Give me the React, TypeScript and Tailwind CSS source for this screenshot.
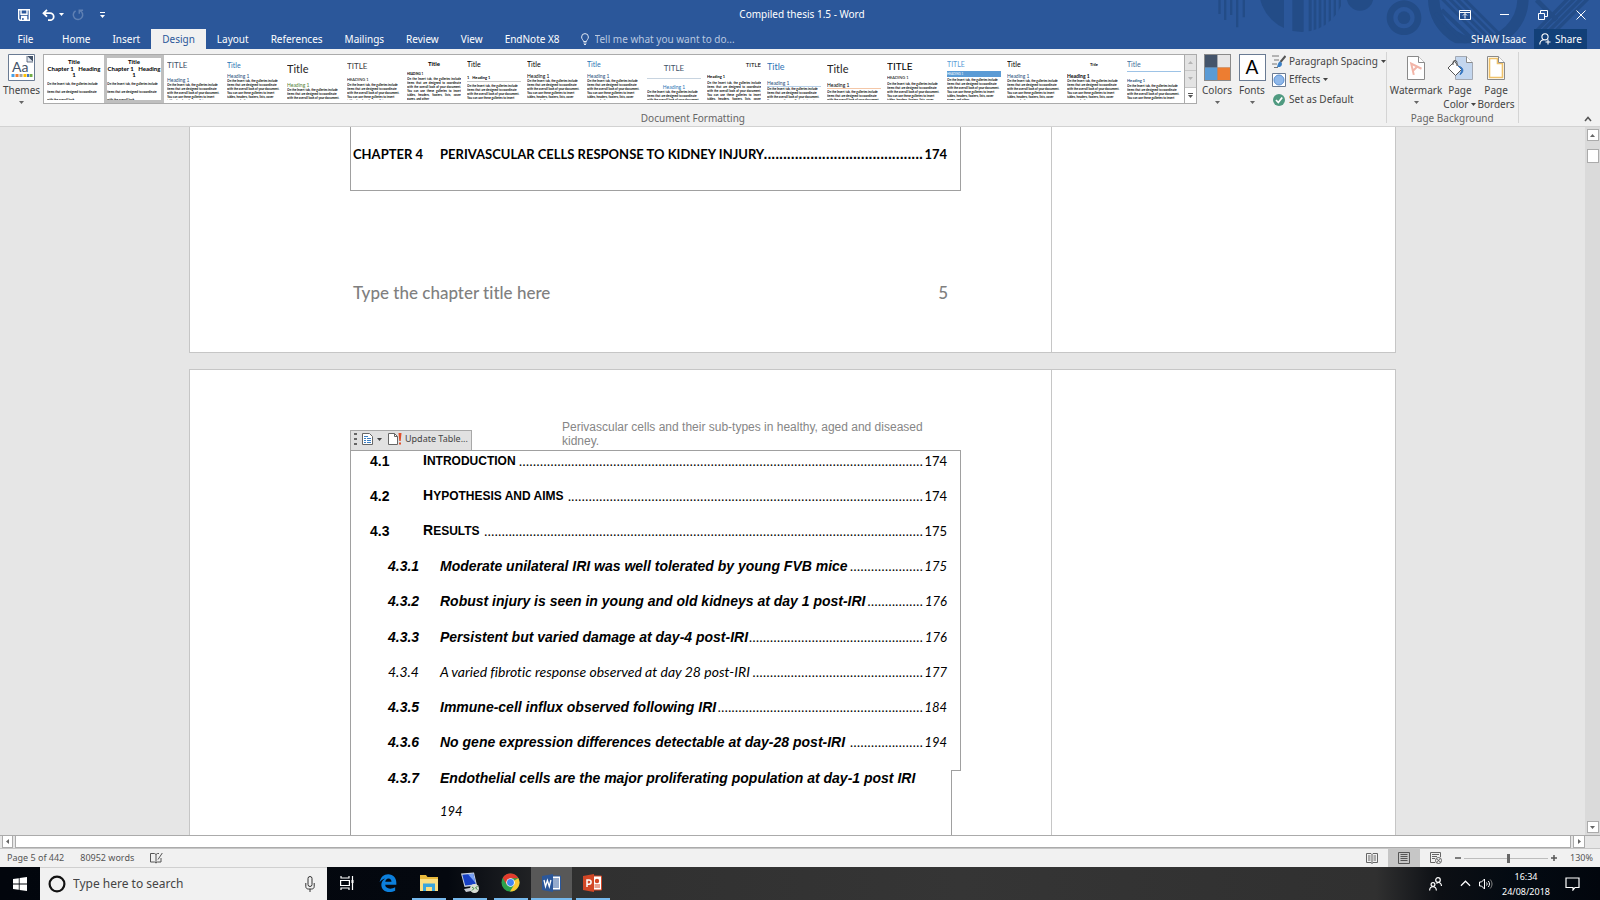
import type { ReactNode } from "react";

const BODY =
  "On the Insert tab, the galleries include items that are designed to coordinate with the overall look of your document. You can use these galleries to insert tables, headers, footers, lists, cover pages, and other";

type Style = { title: string; titleCls: string; head: string; headCls: string; body?: string; bodyCls?: string; selected?: boolean };

const STYLES: Style[] = [
  { title: "Title", titleCls: "text-[6px] leading-[8px] font-bold text-center", head: "Chapter 1   Heading\n1", headCls: "text-[6px] leading-[6px] font-bold text-center whitespace-pre mb-[2px]", body: "On the Insert tab, the galleries include items that are designed to coordinate with the overall look", bodyCls: "leading-[8px]" },
  { title: "Title", titleCls: "text-[6px] leading-[8px] font-bold text-center", head: "Chapter 1   Heading\n1", headCls: "text-[6px] leading-[6px] font-bold text-center whitespace-pre mb-[2px]", body: "On the Insert tab, the galleries include items that are designed to coordinate with the overall look", bodyCls: "leading-[8px]", selected: true },
  { title: "TITLE", titleCls: "text-[8px] leading-[14px] text-[#44546a]", head: "Heading 1", headCls: "text-[5px] leading-[6px] mt-[5px] text-[#1f4e79]" },
  { title: "Title", titleCls: "text-[7px] leading-[14px] text-[#2e74b5]", head: "Heading 1", headCls: "text-[5px] leading-[5px] mt-[2px] text-[#1f4e79]" },
  { title: "Title", titleCls: "text-[11px] leading-[22px] text-[#262626]", head: "Heading 1", headCls: "text-[5px] leading-[6px] mt-[2px] text-[#538135]" },
  { title: "TITLE", titleCls: "text-[8px] leading-[16px] text-[#404040]", head: "HEADING 1", headCls: "text-[4px] leading-[6px] mt-[3px]" },
  { title: "Title", titleCls: "text-[6px] leading-[12px] font-bold text-center", head: "HEADING 1", headCls: "text-[3px] leading-[5px] mt-[2px] font-bold", bodyCls: "leading-[4px] text-justify" },
  { title: "Title", titleCls: "text-[7px] leading-[13px]", head: "1   Heading 1", headCls: "text-[4px] leading-[6px] mt-[4px] mb-[2px] border-b border-[#c8c8c8] whitespace-pre font-bold" },
  { title: "Title", titleCls: "text-[7px] leading-[13px]", head: "Heading 1", headCls: "text-[5px] leading-[6px] mt-[2px]" },
  { title: "Title", titleCls: "text-[7px] leading-[13px] text-[#2e74b5]", head: "Heading 1", headCls: "text-[5px] leading-[6px] mt-[2px] text-[#1f4e79]" },
  { title: "TITLE", titleCls: "text-[8px] leading-[20px] text-[#44546a] text-center border-b border-[#c8d4e0]", head: "Heading 1", headCls: "text-[5px] leading-[6px] mt-[5px] text-center text-[#2e74b5]" },
  { title: "TITLE", titleCls: "text-[6px] leading-[14px] text-right", head: "Heading 1", headCls: "text-[4px] leading-[6px] mt-[2px] mb-[1px] font-bold", bodyCls: "leading-[4px] text-justify" },
  { title: "Title", titleCls: "text-[9px] leading-[18px] text-[#2e74b5]", head: "Heading 1", headCls: "text-[5px] leading-[6px] mt-[4px] text-[#1f4e79] border-b border-[#b8d0e8]" },
  { title: "Title", titleCls: "text-[11px] leading-[22px] text-[#262626]", head: "Heading 1", headCls: "text-[5px] leading-[6px] mt-[2px] mb-[1px] border-b border-[#f4c7a8]" },
  { title: "TITLE", titleCls: "text-[10px] leading-[17px]", head: "HEADING 1", headCls: "text-[4px] leading-[6px] mb-[1px]" },
  { title: "TITLE", titleCls: "text-[7px] leading-[13px] text-[#5b9bd5]", head: "HEADING 1", headCls: "text-[3px] leading-[6px] bg-[#5b9bd5] text-white mb-[1px]" },
  { title: "Title", titleCls: "text-[7px] leading-[13px]", head: "Heading 1", headCls: "text-[5px] leading-[6px] mt-[2px] text-[#1f4e79]" },
  { title: "Title", titleCls: "text-[4px] leading-[14px] font-bold text-center", head: "Heading 1", headCls: "text-[5px] leading-[6px] mt-[1px] font-bold", bodyCls: "leading-[4px] font-bold" },
  { title: "Title", titleCls: "text-[7px] leading-[13px] text-[#44709d] border-b border-[#9dc3e6]", head: "Heading 1", headCls: "text-[4px] leading-[6px] mt-[6px] text-[#1f4e79] font-bold" },
];

const TABS = ["Home", "Insert", "Design", "Layout", "References", "Mailings", "Review", "View", "EndNote X8"];

type Entry = { no: string; title: string; dots: number; page: string; plain?: boolean };

const SECTIONS: Entry[] = [
  { no: "4.1", title: "Introduction", dots: 116, page: "174" },
  { no: "4.2", title: "Hypothesis and aims", dots: 102, page: "174" },
  { no: "4.3", title: "Results", dots: 126, page: "175" },
];

const SUBSECTIONS: Entry[] = [
  { no: "4.3.1", title: "Moderate unilateral IRI was well tolerated by young FVB mice", dots: 21, page: "175" },
  { no: "4.3.2", title: "Robust injury is seen in young and old kidneys at day 1 post-IRI", dots: 16, page: "176" },
  { no: "4.3.3", title: "Persistent but varied damage at day-4 post-IRI", dots: 50, page: "176" },
  { no: "4.3.4", title: "A varied fibrotic response observed at day 28 post-IRI", dots: 49, page: "177", plain: true },
  { no: "4.3.5", title: "Immune-cell influx observed following IRI", dots: 59, page: "184" },
  { no: "4.3.6", title: "No gene expression differences detectable at day-28 post-IRI", dots: 21, page: "194" },
];

function Caret({ className = "" }: { className?: string }) {
  return (
    <svg viewBox="0 0 5 3" className={`h-[3px] w-[5px] shrink-0 ${className}`} aria-hidden="true">
      <path d="M0 0h5L2.5 3z" fill="currentColor" />
    </svg>
  );
}

function Leader({ count, className = "font-['Noto_Sans',sans-serif] text-[13px]" }: { count: number; className?: string }) {
  return (
    <span className={`flex min-w-0 flex-1 justify-end overflow-hidden pr-px not-italic ${className}`}>
      {".".repeat(count)}
    </span>
  );
}

function HeaderArt() {
  return (
    <svg viewBox="0 0 1200 147" className="pointer-events-none absolute top-0 right-0 h-[49px] w-[400px]" aria-hidden="true">
      <defs>
        <clipPath id="disc"><circle cx="305" cy="-32" r="128" /></clipPath>
        <clipPath id="wheel"><path d="M680 0h310v130H680z" /></clipPath>
        <clipPath id="inner"><circle cx="835" cy="-5" r="125" /></clipPath>
      </defs>
      <g fill="#234c87">
        <path d="M55 0h7v42h-7zM72 0h7v60h-7zM90 0h7v45h-7zM108 0h7v82h-7zM128 0h7v52h-7z" />
        <g clipPath="url(#disc)">
          <path d="M160 0h92v110h-92zM277 0h34v110h-34zM326 0h9v110h-9zM341 0h8v110h-8zM356 0h8v110h-8zM371 0h7v110h-7zM386 0h7v110h-7zM401 0h7v110h-7zM416 0h7v110h-7z" />
        </g>
        <circle cx="480" cy="-8" r="40" />
        <path fillRule="evenodd" d="M612 1a52 52 0 1 0 .1 0zM612 21a32 32 0 1 1-.1 0z" />
        <circle cx="612" cy="53" r="19" />
      </g>
      <g clipPath="url(#wheel)" fill="none" stroke="#234c87">
        <circle cx="835" cy="-5" r="134" strokeWidth="34" />
        <g clipPath="url(#inner)" strokeWidth="9">
          <path d="M700 -30L880 150M722 -30L902 150M744 -30L924 150M766 -30L946 150" />
        </g>
        <path d="M705 40L800 130M725 30L830 130" strokeWidth="12" />
      </g>
      <g stroke="#234c87" strokeWidth="10" fill="none">
        <path d="M1010 92L1105 -5M1028 92L1125 -5M1048 92L1145 -5M1068 92L1165 -5" />
        <path d="M1010 0l60 60" strokeWidth="14" />
      </g>
    </svg>
  );
}

function TitleBar() {
  return (
    <header className="relative shrink-0 bg-[#2b579a] text-white">
      <HeaderArt />
      <div className="relative flex h-[29px] items-center">
        <div className="flex flex-1 items-center pl-[18px]">
          <button aria-label="Save" className="mr-3">
            <svg viewBox="0 0 12 12" className="h-3 w-3" fill="none" stroke="white" strokeWidth="1.4">
              <path d="M.7.7h10.6v10.6H2L.7 10zM3 .7v4.6h6V.7" /><path d="M3.6 7.5h5v3.8h-5z" fill="white" /><path d="M4.9 9v2" stroke="#2b579a" />
            </svg>
          </button>
          <button aria-label="Undo" className="flex items-center gap-1">
            <svg viewBox="0 0 13 12" className="h-3 w-[13px]" fill="none" stroke="white" strokeWidth="1.8">
              <path d="M5 .8L1.5 4.2 5 7.6M1.5 4.2H8a3.6 3.4 0 0 1 0 7H6" />
            </svg>
            <Caret />
          </button>
          <button aria-label="Repeat" className="ml-2">
            <svg viewBox="0 0 12 12" className="h-3 w-3" fill="none" stroke="#5f80b3" strokeWidth="1.5">
              <path d="M8 1.6a4.7 4.7 0 1 1-4.4.2M7.3 4.8V1.3h3.8" />
            </svg>
          </button>
          <button aria-label="Customize Quick Access Toolbar" className="ml-4 flex flex-col items-center gap-0.5">
            <span className="h-px w-[5px] bg-white" />
            <Caret />
          </button>
        </div>
        <h1 className="text-[10px]">Compiled thesis 1.5 - Word</h1>
        <div className="flex flex-1 items-center justify-end gap-7 pr-3.5">
          <button aria-label="Ribbon Display Options">
            <svg viewBox="0 0 12 10" className="h-2.5 w-3" fill="none" stroke="white"><path d="M.5.5h11v9H.5zM.5 2.5h11M6 8.5v-5M4 5.5l2-2 2 2" /></svg>
          </button>
          <button aria-label="Minimize" className="px-px">
            <svg viewBox="0 0 9 9" className="h-[9px] w-[9px]" stroke="white"><path d="M0 4.5h9" /></svg>
          </button>
          <button aria-label="Restore Down">
            <svg viewBox="0 0 10 10" className="h-2.5 w-2.5" fill="none" stroke="white"><path d="M.5 3.5h6v6h-6zM2.5 3.5v-3h7v6h-3" /></svg>
          </button>
          <button aria-label="Close">
            <svg viewBox="0 0 10 10" className="h-2.5 w-2.5" stroke="white"><path d="M.5.5l9 9M9.5.5l-9 9" /></svg>
          </button>
        </div>
      </div>
      <nav className="relative flex h-5 items-stretch text-[10px]" aria-label="Ribbon tabs">
        <button className="w-[51px]">File</button>
        {TABS.map((t) => (
          <button key={t} className={t === "Design" ? "bg-[#f1f1f1] px-[11px] text-[#2b579a]" : "px-[11px]"}>
            {t}
          </button>
        ))}
        <label className="ml-[10px] flex items-center gap-1.5">
          <svg viewBox="0 0 8 12" className="h-3 w-2" fill="none" stroke="#dfe6f2">
            <path d="M2.5 8.5C2.5 7 .6 6.3.6 4a3.4 3.4 0 0 1 6.8 0C7.4 6.3 5.5 7 5.5 8.5zM2.5 10h3M3 11.500h2" />
          </svg>
          <input className="w-40 bg-transparent text-[10px] placeholder:text-[#b9c8e0]" aria-label="Tell me what you want to do" placeholder="Tell me what you want to do..." />
        </label>
        <div className="ml-auto flex items-stretch pr-[13px]">
          <button className="px-2">SHAW Isaac</button>
          <button className="flex w-[53px] items-center justify-center gap-1 bg-[#124078]">
            <svg viewBox="0 0 12 12" className="h-3 w-3" fill="none" stroke="white" strokeWidth="1.1">
              <circle cx="6" cy="3.8" r="3.1" /><path d="M.8 11.500c0-2.800 1.700-4.300 3.900-4.700M9 6.500v5M6.500 9h5" />
            </svg>
            Share
          </button>
        </div>
      </nav>
    </header>
  );
}

function BigButton({ icon, label, caret, className = "" }: { icon: ReactNode; label: ReactNode; caret?: boolean; className?: string }) {
  return (
    <button className={`flex flex-col items-center ${className}`}>
      <span className="flex h-[27px] items-center">{icon}</span>
      <span className="mt-0.5 leading-[14px]">{label}</span>
      {caret && <Caret className="mt-1 text-[#666]" />}
    </button>
  );
}

function Gallery() {
  return (
    <div className="flex h-[50px] shrink-0 border border-[#ababab] bg-white">
      <div className="flex" role="listbox" aria-label="Document style sets">
        {STYLES.map((s, i) => (
          <button
            key={i}
            role="option"
            aria-selected={!!s.selected}
            className={`flex w-[60px] flex-col overflow-hidden text-left font-['Lato',sans-serif] text-black ${s.selected ? "border-[3px] border-[#bfbfbf]" : "p-[3px]"}`}
          >
            <span className="block h-[42px] w-full overflow-hidden">
              <span className={`block ${s.titleCls}`}>{s.title}</span>
              <span className={`block ${s.headCls}`}>{s.head}</span>
              <span className={`block text-[3px] font-bold ${s.bodyCls ?? "leading-[4px]"}`}>{s.body ?? BODY}</span>
            </span>
          </button>
        ))}
      </div>
      <div className="flex w-3 flex-col border-l border-[#ababab]">
        <button aria-label="Row up" className="flex flex-1 items-center justify-center border-b border-[#c6c6c6] bg-[#e3e3e3] text-[#b5b5b5]"><Caret className="rotate-180" /></button>
        <button aria-label="Row down" className="flex flex-1 items-center justify-center border-b border-[#c6c6c6] bg-[#e3e3e3] text-[#b5b5b5]"><Caret /></button>
        <button aria-label="More styles" className="flex flex-1 flex-col items-center justify-center gap-px text-[#555]"><span className="h-px w-[5px] bg-current" /><Caret /></button>
      </div>
    </div>
  );
}

function Ribbon() {
  return (
    <section className="flex h-[78px] shrink-0 border-b border-[#d2d2d2] bg-[#f1f1f1] text-[10px] text-[#444]" aria-label="Design ribbon">
      <div className="my-[3px] flex flex-col border-r border-[#d4d4d4]">
        <div className="flex pt-[2px]">
          <BigButton
            className="w-[43px]"
            caret
            label="Themes"
            icon={
              <svg viewBox="0 0 27 27" className="h-[27px] w-[27px]">
                <path d="M.5.5h26v26H.5z" fill="#fff" stroke="#6a7b93" />
                <path d="M19 2h6v6z" fill="#44546a" /><path d="M19 2v6h6" fill="#dfe5ee" stroke="#44546a" strokeWidth=".8" />
                <text x="4" y="18" fontSize="14" fill="#44546a" fontFamily="Lato, sans-serif">Aa</text>
                <path d="M3.500 20h3v3h-3z" fill="#44a0e8" /><path d="M7.500 20h3v3h-3z" fill="#ed7d31" /><path d="M11.500 20h3v3h-3z" fill="#a5a5a5" /><path d="M15.500 20h3v3h-3z" fill="#ffc000" /><path d="M19 20h2v3h-2z" fill="#4472c4" /><path d="M21.500 20h3v3h-3z" fill="#70ad47" />
              </svg>
            }
          />
          <Gallery />
          <BigButton
            className="ml-[3px] w-[34px]"
            caret
            label="Colors"
            icon={
              <svg viewBox="0 0 27 27" className="h-[27px] w-[27px]">
                <path d="M0 0h27v27H0z" fill="#8a8a8a" /><path d="M1 1h12.500v12.500H1z" fill="#44546a" /><path d="M13.500 1H26v12.500H13.500z" fill="#e7e6e6" /><path d="M1 13.500h12.500V26H1z" fill="#5b9bd5" /><path d="M13.500 13.500H26V26H13.500z" fill="#ed7d31" />
              </svg>
            }
          />
          <BigButton
            className="ml-px w-[34px]"
            caret
            label="Fonts"
            icon={
              <span className="flex h-[27px] w-[27px] items-center justify-center border border-[#6a7b93] bg-white font-['Lato',sans-serif] text-[19px] text-black" aria-hidden="true">A</span>
            }
          />
          <div className="ml-[3px] flex flex-col">
            <button className="flex h-[15px] items-center gap-[3px]">
              <svg viewBox="0 0 14 14" className="h-3.5 w-3.5" fill="none">
                <path d="M0 1h7M2 5h5M0 9h5M2 12.500h4" stroke="#777" /><path d="M13.500 1L8.500 7" stroke="#555" strokeWidth="2" /><path d="M8.500 6.500c-2 0-2.500 2-3.500 5.500 3 .5 5-.5 5-3.500z" fill="#3b7fc4" />
              </svg>
              Paragraph Spacing <Caret />
            </button>
            <button className="mt-[3px] flex h-[15px] items-center gap-[3px]">
              <svg viewBox="0 0 14 14" className="h-3.5 w-3.5"><path d="M.5.5h13v13H.5z" fill="#fff" stroke="#6a7b93" /><circle cx="7" cy="7" r="5" fill="#8fb8ea" stroke="#5b8fd0" /></svg>
              Effects <Caret />
            </button>
            <button className="mt-[5px] flex h-[15px] items-center gap-[3px]">
              <svg viewBox="0 0 14 14" className="h-3.5 w-3.5"><circle cx="7" cy="7" r="6" fill="#4f9a80" /><path d="M4 7l2.300 2.500L10.200 4.500" fill="none" stroke="#fff" strokeWidth="1.7" /></svg>
              Set as Default
            </button>
          </div>
        </div>
        <p className="mt-auto text-center leading-[10px] text-[#666]">Document Formatting</p>
      </div>
      <div className="my-[3px] flex flex-col border-r border-[#d4d4d4] px-[3px]">
        <div className="flex gap-px pt-[2px]">
          <BigButton
            caret
            label="Watermark"
            icon={
              <svg viewBox="0 0 18 24" className="h-6 w-[18px]"><path d="M.5.5h11l6 6v17H.5z" fill="#fff" stroke="#8a8a8a" /><path d="M11.500.5v6h6" fill="#fff" stroke="#8a8a8a" /><path d="M6 18.500L5 7l9.500 6.500M5.500 14.500l5.500-4" transform="rotate(-8 9 13)" fill="none" stroke="#f2b5a8" strokeWidth="2" /></svg>
            }
          />
          <BigButton
            label={<>Page<br /><span className="inline-flex items-center gap-[3px]">Color <Caret /></span></>}
            icon={
              <svg viewBox="0 0 26 24" className="h-6 w-[26px]"><path d="M8.500.5h11l6 6v17h-17z" fill="#c3d6ee" stroke="#a3a9b3" /><path d="M19.500.5v6h6" fill="#fff" stroke="#8a8a8a" /><path d="M7.500 5.500l7 8-6 6-7.500-7.500z" fill="#fff" stroke="#555" /><path d="M6 9V6.500a2 2 0 0 1 4 0V10" fill="none" stroke="#555" /><path d="M11.500 10.500c3.500.5 4 4 1.500 8 4-1.500 4-8-1.500-8z" fill="#2f73c0" stroke="#2f73c0" /></svg>
            }
          />
          <BigButton
            label={<>Page<br />Borders</>}
            icon={
              <svg viewBox="0 0 18 24" className="h-6 w-[18px]"><path d="M.5.5h11l6 6v17H.5z" fill="#fff" stroke="#8a8a8a" /><path d="M2.500 2.500h8v5h5v14h-13z" fill="none" stroke="#efc169" strokeWidth="1.6" /><path d="M11.500.5v6h6" fill="#fff" stroke="#8a8a8a" /></svg>
            }
          />
        </div>
        <p className="mt-auto text-center leading-[10px] text-[#666]">Page Background</p>
      </div>
      <button aria-label="Collapse the Ribbon" className="mt-auto mr-2 mb-1 ml-auto">
        <svg viewBox="0 0 8 6" className="h-1.5 w-2" fill="none" stroke="#555" strokeWidth="1.500"><path d="M1 5l3-3.500L7 5" /></svg>
      </button>
    </section>
  );
}

function Sheet({ children, className, bodyClassName = "" }: { children: ReactNode; className: string; bodyClassName?: string }) {
  return (
    <article className={`mx-auto flex w-[1207px] border border-[#c6c6c6] bg-white ${className}`}>
      <div className={`flex w-[862px] flex-col border-r border-[#c6c6c6] pl-[160px] ${bodyClassName}`}>{children}</div>
    </article>
  );
}

function TocRow({ e, sub, className = "min-h-0 flex-1" }: { e: Entry; sub?: boolean; className?: string }) {
  const face = e.plain
    ? "font-['Lato',sans-serif] text-[14px] [font-variant-ligatures:none]"
    : "font-['Liberation_Sans',sans-serif] text-[14px] font-bold";
  return (
    <li className={`flex items-center pr-[13px] leading-[18px] ${sub ? "pl-[37px] italic" : "pl-[19px]"} ${className}`}>
      <span className={`${sub ? "w-[52px]" : "w-[53px]"} shrink-0 ${face}`}>{e.no}</span>
      {sub ? (
        <span className={`whitespace-nowrap ${face}`}>{e.title}</span>
      ) : (
        <span className="font-['Liberation_Sans',sans-serif] text-[12px] font-bold whitespace-nowrap uppercase first-letter:text-[14px]">{e.title}</span>
      )}
      <Leader count={e.dots} />
      <span className="w-[23px] shrink-0 text-right font-['Lato',sans-serif] text-[13px]">{e.page}</span>
    </li>
  );
}

function Document() {
  return (
    <main className="min-w-0 flex-1 overflow-hidden text-black">
      <Sheet className="h-[226px] border-t-0">
        <div className="h-16 w-[611px] border border-t-0 border-[#a0a0a0] pt-[15px] pr-[13px] pl-[2px]">
          <div className="flex items-center font-['Lato',sans-serif] text-[13px] leading-6 font-bold">
            <span className="w-[87px]">CHAPTER 4</span>
            <span className="whitespace-nowrap">PERIVASCULAR CELLS RESPONSE TO KIDNEY INJURY</span>
            <Leader count={45} className="font-['Liberation_Sans',sans-serif] text-[14px]" />
            <span className="w-[23px] text-right">174</span>
          </div>
        </div>
        <footer className="mt-[90px] flex w-[598px] justify-between pl-[3px] font-['Lato',sans-serif] text-[17px] leading-6 font-medium text-[#7f7f7f] [font-variant-ligatures:none]">
          <span>Type the chapter title here</span>
          <span>5</span>
        </footer>
      </Sheet>
      <Sheet className="mt-4 h-[800px]" bodyClassName="pt-[50px]">
        <div className="flex h-[30px] items-end">
          <div className="flex h-5 w-[122px] items-center border border-b-0 border-[#a8a8a8] bg-[#e1e1e1] pb-[3px] pl-[3px] font-['Noto_Sans',sans-serif] text-[9px] text-[#444]">
            <svg viewBox="0 0 3 12" className="h-3 w-[3px]"><path d="M0 0h3v2H0zM0 5h3v2H0zM0 10h3v2H0z" fill="#666" /></svg>
            <button aria-label="Table of Contents" className="ml-[5px] flex items-center gap-1">
              <svg viewBox="0 0 11 12" className="h-3 w-[11px]"><path d="M.5.5h7l3 3v8H.5z" fill="#fff" stroke="#666" /><path d="M2 3.500h4M2 5.500h2M5 5.500h4M2 7.500h2M5 7.500h4M2 9.500h2M5 9.500h4" stroke="#3b7fc4" /></svg>
              <Caret />
            </button>
            <button className="ml-1.5 flex items-center gap-[3px] whitespace-nowrap">
              <svg viewBox="0 0 14 12" className="h-3 w-3.5"><path d="M.5.5h6l3 3v8H.5z" fill="#fff" stroke="#666" /><path d="M6.500.5v3h3" fill="none" stroke="#666" /><path d="M10.500 0h3l-.8 8h-1.400zM11 9.500h2v2h-2z" fill="#e0502c" /></svg>
              Update Table...
            </button>
          </div>
          <p className="ml-[90px] h-[30px] w-[372px] font-['Liberation_Sans',sans-serif] text-[12px] leading-[14px] text-[#868686]">
            Perivascular cells and their sub-types in healthy, aged and diseased kidney.
          </p>
        </div>
        <ol className="flex h-[320px] w-[611px] flex-col border-x border-t border-[#a0a0a0] pb-[10px]">
          {SECTIONS.map((e, i) => (
            <TocRow key={e.no} e={e} className={i === 0 ? "mb-2 h-[19px] shrink-0" : "min-h-0 flex-1"} />
          ))}
          {SUBSECTIONS.map((e) => (
            <TocRow key={e.no} e={e} sub />
          ))}
        </ol>
        <div className="flex w-[611px] flex-1">
          <div className="w-[602px] border-x border-[#a0a0a0] pl-[37px] font-['Liberation_Sans',sans-serif] text-[14px] leading-4 font-bold italic">
            <div className="flex">
              <span className="w-[52px]">4.3.7</span>
              <span className="whitespace-nowrap">Endothelial cells are the major proliferating population at day-1 post IRI</span>
            </div>
            <p className="mt-[17px] pl-[52px] font-['Lato',sans-serif] text-[13px] font-normal">194</p>
          </div>
          <div className="flex-1 border-t border-[#a0a0a0]" />
        </div>
      </Sheet>
    </main>
  );
}

const arrowBtn = "flex shrink-0 items-center justify-center border border-[#ababab] bg-white text-[#666]";

function StatusBar() {
  return (
    <footer className="flex h-[19px] shrink-0 items-stretch border-t border-[#c6c6c6] bg-[#f1f1f1] text-[9px] text-[#555]">
      <button className="pl-[7px]">Page 5 of 442</button>
      <button className="pl-4">80952 words</button>
      <button aria-label="Proofing" className="pl-4">
        <svg viewBox="0 0 13 12" className="h-3 w-[13px]" fill="none" stroke="#555"><path d="M6 2.500L4.500 1.500H.5v8.500h4L6 11l1.500-1H11V6M6 2.500V11M6 2.500l1.500-1H9M12.300 1L8 7.500" /></svg>
      </button>
      <div className="ml-auto flex items-stretch">
        <button aria-label="Read Mode" className="w-[32px]">
          <svg viewBox="0 0 12 11" className="mx-auto h-[11px] w-3" fill="none" stroke="#666"><path d="M6 1.500L5 .5H.5v9H5l1 1 1-1h4.500v-9H7zM6 1.500v9M2 3h2.500M2 5h2.500M2 7h2.500M7.500 3H10M7.500 5H10M7.500 7H10" /></svg>
        </button>
        <button aria-label="Print Layout" className="w-[32px] bg-[#c6c6c6]">
          <svg viewBox="0 0 12 12" className="mx-auto h-3 w-3" fill="none" stroke="#555"><path d="M.5.5h11v11H.5zM2.500 2.500h7M2.500 4.500h7M2.500 6.500h7M2.500 8.500h7" /></svg>
        </button>
        <button aria-label="Web Layout" className="w-[32px]">
          <svg viewBox="0 0 12 12" className="mx-auto h-3 w-3" fill="none" stroke="#666"><path d="M5 10.500H.5v-10h10V5M2 2.500h7M2 4.500h5M2 6.500h3" /><circle cx="8.500" cy="8.500" r="3" /><path d="M6.500 7l4 3M10 6.500l-3 4" /></svg>
        </button>
        <div className="ml-[3px] flex items-center gap-[3px]">
          <button aria-label="Zoom out"><svg viewBox="0 0 6 6" className="h-1.5 w-1.5" stroke="#555" strokeWidth="1.500"><path d="M0 3h6" /></svg></button>
          <input
            type="range"
            min={10}
            max={250}
            defaultValue={138}
            aria-label="Zoom"
            className="h-3 w-[84px] appearance-none bg-[linear-gradient(#bdbdbd,#bdbdbd)] bg-[length:100%_1px] bg-center bg-no-repeat [&::-webkit-slider-thumb]:h-[9px] [&::-webkit-slider-thumb]:w-[3px] [&::-webkit-slider-thumb]:appearance-none [&::-webkit-slider-thumb]:bg-[#666]"
          />
          <button aria-label="Zoom in"><svg viewBox="0 0 6 6" className="h-1.5 w-1.5" stroke="#555" strokeWidth="1.500"><path d="M0 3h6M3 0v6" /></svg></button>
        </div>
        <button className="w-[43px] pr-[7px] text-right">130%</button>
      </div>
    </footer>
  );
}

function TaskIcon({ label, children, running, active }: { label: string; children: ReactNode; running?: boolean; active?: boolean }) {
  return (
    <button aria-label={label} className={`flex w-[41px] flex-col items-center ${active ? "bg-[#585858]" : ""}`}>
      <span className="flex flex-1 items-center justify-center">{children}</span>
      <span className={`h-0.5 ${active ? "w-full" : "w-[34px]"} ${running ? "bg-[#76b9ed]" : ""}`} />
    </button>
  );
}

function Taskbar() {
  return (
    <footer className="flex h-[33px] shrink-0 items-stretch bg-[linear-gradient(90deg,#02060d_0%,#04080f_28%,#303030_36%,#353535_60%,#303030_86%,#0c0f14_90%,#030a12_95%,#02060d_100%)] text-white">
      <button aria-label="Start" className="flex w-10 items-center justify-center">
        <svg viewBox="0 0 14 14" className="h-3.5 w-3.5"><path d="M0 2l5.800-.8v5.400H0zM6.600 1.100L14 0v6.600H6.600zM0 7.400h5.800v5.400L0 12zM6.600 7.400H14V14l-7.400-1.100z" fill="#fff" /></svg>
      </button>
      <label className="flex w-[287px] items-center border-t border-[#d0d0d0] bg-[#f1f1f1] pr-3 pl-2">
        <svg viewBox="0 0 18 18" className="h-[18px] w-[18px]"><circle cx="9" cy="9" r="7.400" fill="none" stroke="#111" strokeWidth="2.200" /></svg>
        <input className="ml-[7px] min-w-0 flex-1 bg-transparent text-[12px] text-[#222] placeholder:text-[#444]" aria-label="Search" placeholder="Type here to search" />
        <svg viewBox="0 0 10 16" className="h-4 w-2.5" fill="none" stroke="#333"><rect x="3" y=".5" width="4" height="10" rx="2" /><path d="M.8 7v3.500c0 1.500 1 2.500 2.500 2.500h3.400c1.500 0 2.500-1 2.500-2.500V7M5 13v3" /></svg>
      </label>
      <div className="-ml-px flex items-stretch">
        <TaskIcon label="Task View">
          <svg viewBox="0 0 14 14" className="h-3.5 w-3.5" fill="none" stroke="#fff" strokeWidth="1.200"><path d="M1 0v2h8V0M1 14v-2h8v2M.6 4.500h8.800v5H.6zM12.500 0v14" /><path d="M11.500 4h2v3h-2z" fill="#fff" stroke="none" /></svg>
        </TaskIcon>
        <TaskIcon label="Microsoft Edge">
          <svg viewBox="0 0 24 24" className="h-5 w-5"><path d="M2 11.200C2.900 5 7 1.500 12.200 1.500c6.200 0 9.800 4.500 9.800 10.300v2.400H8.600c.2 3 2.700 4.600 6 4.600 2.200 0 4.200-.6 6-1.700v4.200c-1.900 1-4.300 1.600-6.900 1.600-5.800 0-9.700-3.500-9.700-8.800 0-3.200 1.600-6 4.600-7.600C5.500 7.300 3.300 8.800 2 11.200zM8.700 10.400h7.500c0-2.400-1.400-3.900-3.600-3.900-2.100 0-3.500 1.500-3.900 3.900z" fill="#0c7fdc" /></svg>
        </TaskIcon>
        <TaskIcon label="File Explorer" running>
          <svg viewBox="0 0 20 18" className="h-[18px] w-5"><path d="M1 1h6l1.500 2H19v14H1z" fill="#e8b93c" /><path d="M1 5h18v12H1z" fill="#fbdf83" /><path d="M4 9.500h12V17h-3v-4H7v4H4z" fill="#3aa6dd" /></svg>
        </TaskIcon>
        <TaskIcon label="Remote Desktop" running>
          <svg viewBox="0 0 20 22" className="h-[22px] w-5"><path d="M1 1.500L14 .5l3 13L4.500 15z" fill="#c9d2e2" /><path d="M2.300 2.800L13.200 1.800l2.500 10.500L5.200 13.500z" fill="#1740c4" /><path d="M8 2.300l5.200-.5 2.200 9z" fill="#7aa2f2" /><path d="M4 17l8-1.500 2 3L6 20z" fill="#c8ccd3" /><circle cx="14.500" cy="16.500" r="4.500" fill="#d9ddd5" /><path d="M12 15l2 1.500-2 2M17.500 14l-2 2 2 1.500" stroke="#3f8f3f" fill="none" /></svg>
        </TaskIcon>
        <TaskIcon label="Google Chrome" running>
          <svg viewBox="0 0 20 20" className="h-[19px] w-[19px]"><circle cx="10" cy="10" r="9.500" fill="#2ba24c" /><path d="M10 10L1.800 5.200A9.500 9.500 0 0 1 18.300 5.500L10 5.500z" fill="#e33b2e" /><path d="M10 10L18.300 5.500A9.500 9.500 0 0 1 9.500 19.500L14 12z" fill="#fcc934" /><path d="M1.800 5.200L6 12 10 8z" fill="#e33b2e" /><circle cx="10" cy="10" r="4.500" fill="#fff" /><circle cx="10" cy="10" r="3.600" fill="#4285f4" /></svg>
        </TaskIcon>
        <TaskIcon label="Word" running active>
          <svg viewBox="0 0 19 18" className="h-[18px] w-[19px]"><path d="M10 2h8.500v14H10z" fill="#fff" stroke="#2b579a" /><path d="M11 5h6M11 7h6M11 9h6M11 11h6M11 13h6" stroke="#2b579a" /><path d="M0 2l11-2v18L0 16z" fill="#2b579a" /><path d="M2 6l1.500 6.500L5.400 6.500 7.300 12.500 8.900 6" fill="none" stroke="#fff" strokeWidth="1.300" /></svg>
        </TaskIcon>
        <TaskIcon label="PowerPoint" running>
          <svg viewBox="0 0 19 18" className="h-[18px] w-[19px]"><path d="M10 2h8.500v14H10z" fill="#fff" stroke="#d24726" /><circle cx="14" cy="7" r="2.200" fill="#d24726" /><path d="M11.500 11h5.500M11.500 13h5.500" stroke="#d24726" /><path d="M0 2l11-2v18L0 16z" fill="#d24726" /><path d="M4 13V6h2a2 2 0 0 1 0 4.200H4" fill="none" stroke="#fff" strokeWidth="1.500" /></svg>
        </TaskIcon>
      </div>
      <div className="ml-auto flex items-center pr-5">
        <button aria-label="People" className="mr-[18px]">
          <svg viewBox="0 0 13 14" className="h-3.5 w-[13px]" fill="none" stroke="#fff" strokeWidth="1.200"><circle cx="9" cy="3" r="2.300" /><circle cx="4" cy="7.500" r="1.900" /><path d="M.6 13.500c.2-5 6.500-5 6.800 0M7.500 6.500c2-2 4.800-.8 5 2.500" /></svg>
        </button>
        <button aria-label="Show hidden icons" className="mr-2">
          <svg viewBox="0 0 12 7" className="h-[7px] w-[11px]" fill="none" stroke="#fff" strokeWidth="1.300"><path d="M1 6l5-5 5 5" /></svg>
        </button>
        <button aria-label="Volume" className="mr-2">
          <svg viewBox="0 0 14 12" className="h-3 w-3.5" fill="none" stroke="#fff"><path d="M.5 4v4h2l3 3V1l-3 3zM7.500 4.500c.8 1 .8 2 0 3M9.300 3c1.600 2 1.600 4 0 6" /><path d="M11.200 1.500c2.400 3 2.400 6 0 9" stroke="#888" /></svg>
        </button>
        <time dateTime="2018-08-24T16:34" className="w-[50px] text-center text-[9px] leading-[15px] whitespace-nowrap">16:34<br />24/08/2018</time>
        <button aria-label="Notifications" className="ml-3.5">
          <svg viewBox="0 0 15 14" className="h-3.5 w-[15px]" fill="none" stroke="#fff" strokeWidth="1.200"><path d="M1 1h13v9.500H10L8 13v-2.500H1z" /></svg>
        </button>
      </div>
    </footer>
  );
}

export default function App() {
  return (
    <div className="flex h-screen flex-col overflow-hidden bg-[#e6e6e6] font-['Noto_Sans','Open_Sans',sans-serif]">
      <TitleBar />
      <Ribbon />
      <div className="flex min-h-0 flex-1">
        <Document />
        <div className="flex w-[15px] flex-col items-center bg-[#dadada] pt-[2px] pb-[2px]">
          <button aria-label="Scroll up" className={`${arrowBtn} h-3 w-3`}><Caret className="rotate-180" /></button>
          <div className="mt-2 h-3.5 w-3 border border-[#ababab] bg-white" />
          <button aria-label="Scroll down" className={`${arrowBtn} mt-auto h-3 w-3`}><Caret /></button>
        </div>
      </div>
      <div className="flex h-[13px] shrink-0 gap-[2px] border-t border-[#ababab] pr-[15px] pl-[2px]">
        <button aria-label="Scroll left" className={`${arrowBtn} w-[11px] border-t-0`}><Caret className="rotate-90" /></button>
        <div className="flex-1 border border-t-0 border-[#ababab] bg-white" />
        <button aria-label="Scroll right" className={`${arrowBtn} w-3 border-t-0`}><Caret className="-rotate-90" /></button>
      </div>
      <StatusBar />
      <Taskbar />
    </div>
  );
}
